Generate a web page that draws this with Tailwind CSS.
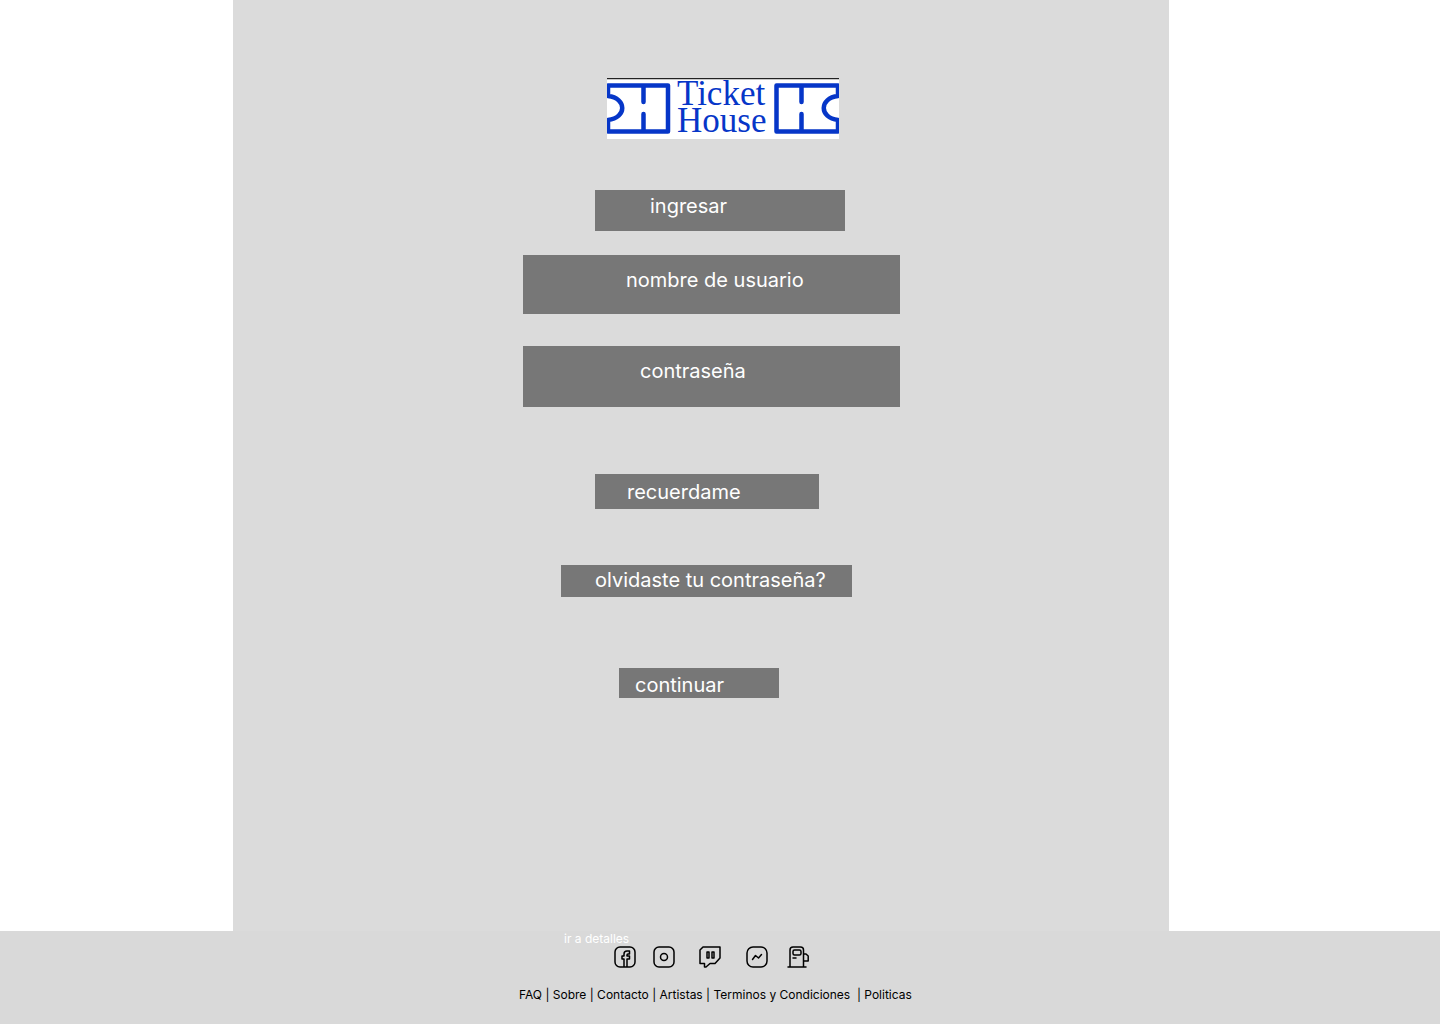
<!DOCTYPE html>
<html lang="es">
<head>
<meta charset="utf-8">
<meta name="viewport" content="width=device-width, initial-scale=1">
<title>Ticket House</title>
<script src="https://cdn.jsdelivr.net/npm/@tailwindcss/browser@4"></script>
</head>
<body class="flex min-h-screen flex-col bg-white font-['Inter',sans-serif]">
<div class="grid grow grid-cols-[233fr_936fr_271fr]">
  <main class="col-start-2 grid grid-cols-[290fr_377px_269fr] bg-[#dbdbdb] pt-[78px]">
    <form class="col-start-2 flex flex-col items-start text-xl leading-6 text-white">
      <svg class="ml-[84px] h-[61px] w-[232px]" viewBox="0 0 232 61" role="img" aria-label="Ticket House">
        <path fill="#fff" d="M0 0h232v61H0z"/>
        <path fill="#222" d="M0 0h232v1H0z"/>
        <path fill="#c8c8c8" d="M0 1h232v1H0z"/>
        <g fill="none" stroke="#0636c8" stroke-width="4.500" stroke-linecap="round" stroke-linejoin="round">
          <path d="M1 18V7.500H61V53.500H1V42C20 40 20 20 1 18M36.500 7.500V24M36.500 36V53.500"/>
          <path d="M231 18V7.500H169.500V53.500H231V42C212 40 212 20 231 18M194.500 7.500V24M194.500 36V53.500"/>
        </g>
        <g fill="#0636c8" font-family="Liberation Serif, serif" font-size="35">
          <text x="70" y="27">Ticket</text>
          <text x="70" y="54">House</text>
        </g>
      </svg>
      <h1 class="mt-[51px] ml-[72px] h-[41px] w-[250px] bg-[#777] pt-1 pl-[55px]">ingresar</h1>
      <input type="text" aria-label="nombre de usuario" placeholder="nombre de usuario" class="mt-6 h-[59px] w-full bg-[#777] pb-2.5 pl-[103px] outline-none placeholder:text-white">
      <input type="password" aria-label="contraseña" placeholder="contraseña" class="mt-8 h-[61px] w-full bg-[#777] pb-3 pl-[117px] outline-none placeholder:text-white">
      <button type="button" class="mt-[67px] ml-[72px] h-[35px] w-[224px] bg-[#777] pl-8 text-left">recuerdame</button>
      <a href="#" class="mt-14 ml-[38px] h-8 w-[291px] bg-[#777] pt-[3px] pl-[34px] whitespace-nowrap">olvidaste tu contraseña?</a>
      <button type="submit" class="mt-[71px] ml-24 h-[30px] w-40 bg-[#777] pt-1 pl-4 text-left">continuar</button>
    </form>
  </main>
</div>
<footer class="grid h-[93px] grid-cols-[519fr_921fr] bg-[#d9d9d9] text-xs leading-4 text-black">
  <div class="col-start-2 flex flex-col items-start">
    <a href="#" class="ml-[45px] h-3.5 text-white">ir a detalles</a>
    <div class="ml-[94px] flex">
      <a href="#" aria-label="Facebook"><svg class="size-6" viewBox="0 0 24 24" fill="none" stroke="currentColor" stroke-width="1.500" stroke-linejoin="round"><rect x="2" y="2" width="20" height="20" rx="5"/><path d="M11 22V14H9V11H11V9C11 7 12 6 14 6H16.500V9H15C14.400 9 14 9.400 14 10V11H16.500V14H14V22"/></svg></a>
      <a href="#" aria-label="Instagram" class="ml-[15px]"><svg class="size-6" viewBox="0 0 24 24" fill="none" stroke="currentColor" stroke-width="1.500"><rect x="2" y="2" width="20" height="20" rx="5"/><circle cx="12" cy="12" r="3.500"/></svg></a>
      <a href="#" aria-label="Twitch" class="ml-[22px]"><svg class="size-6" viewBox="0 0 24 24" fill="none" stroke="currentColor" stroke-width="1.500" stroke-linejoin="round"><path d="M5 2H22V13L17 18.500H12L8 22H6.500V18.500H2V5Z"/><path d="M9 7H11V13H9ZM14 7H16V13H14Z"/></svg></a>
      <a href="#" aria-label="Messenger" class="ml-[23px]"><svg class="size-6" viewBox="0 0 24 24" fill="none" stroke="currentColor" stroke-width="1.500" stroke-linecap="round" stroke-linejoin="round"><rect x="2" y="2" width="20" height="20" rx="6"/><path d="M7.500 14.500L10.500 10.500L13.500 13L16.500 9.500"/></svg></a>
      <a href="#" aria-label="Gasolinera" class="ml-[17px]"><svg class="size-6" viewBox="0 0 24 24" fill="none" stroke="currentColor" stroke-width="1.500" stroke-linecap="round" stroke-linejoin="round"><path d="M2 22H20M4 22V5C4 3 5 2 7 2H14.500C16.500 2 17.500 3 17.500 5V22M17.500 9H20L22.200 11V16H17.500"/><rect x="7" y="5" width="8" height="5" rx="1.500"/><path d="M7 13H10"/></svg></a>
    </div>
    <nav class="mt-[18px] whitespace-pre"><a href="#">FAQ</a> | <a href="#">Sobre</a> | <a href="#">Contacto</a> | <a href="#">Artistas</a> | <a href="#">Terminos y Condiciones</a>  | <a href="#">Politicas</a></nav>
  </div>
</footer>
</body>
</html>
